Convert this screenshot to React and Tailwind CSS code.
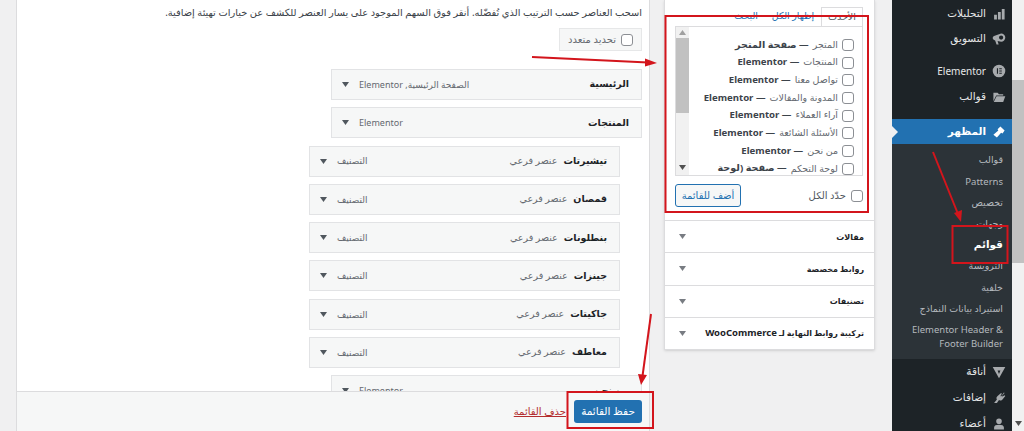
const MENU_ITEMS = [
  { title: "الرئيسية", type: "الصفحة الرئيسية, Elementor" },
  { title: "المنتجات", type: "Elementor" },
  { title: "تيشيرتات", sub: true },
  { title: "قمصان", sub: true },
  { title: "بنطلونات", sub: true },
  { title: "جينزات", sub: true },
  { title: "جاكيتات", sub: true },
  { title: "معاطف", sub: true },
  { title: "من نحن", type: "Elementor" },
];

const PAGES = [
  ["المتجر", "صفحة المتجر"],
  ["المنتجات", "Elementor"],
  ["تواصل معنا", "Elementor"],
  ["المدونة والمقالات", "Elementor"],
  ["آراء العملاء", "Elementor"],
  ["الأسئلة الشائعة", "Elementor"],
  ["من نحن", "Elementor"],
  ["لوحة التحكم", "صفحة (لوحة"],
];

const ACCORDIONS = ["مقالات", "روابط مخصصة", "تصنيفات"];

const SUBMENU = ["قوالب", "Patterns", "تخصيص", "وجهات"];
const SUBMENU_2 = ["الترويسة", "خلفية", "استيراد بيانات النماذج"];

function Caret({ className = "fill-[#50575e]" }) {
  return (
    <svg width="7" height="5" viewBox="0 0 7 5" className={`shrink-0 ${className}`}>
      <polygon points="0,0 7,0 3.5,5" />
    </svg>
  );
}

function Checkbox() {
  return <span className="w-[12px] h-[12px] shrink-0 block rounded-[3px] border border-[#8c8f94] bg-white" />;
}

function MenuRow({ title, type, sub }) {
  return (
    <div className={`w-[311px] h-[31px] shrink-0 flex items-center justify-between border border-[#e2e3e5] bg-[#f6f7f7] pr-[12px] pl-[10px] ${sub ? "mr-[22px]" : ""}`}>
      <div className="flex items-center gap-[6px]">
        <span className="text-[9.5px] font-bold text-[#1d2327]">{title}</span>
        {sub && <span className="text-[9.5px] text-[#646970]">عنصر فرعي</span>}
      </div>
      <div className="flex items-center gap-[10px]">
        <span className="text-[9px] text-[#646970]">{type || "التصنيف"}</span>
        <Caret />
      </div>
    </div>
  );
}

function SideIcon({ children }) {
  return (
    <svg width="14" height="14" viewBox="0 0 20 20" className="shrink-0 fill-[#a7aaad]">
      {children}
    </svg>
  );
}

function SideItem({ label, icon, className = "", textClass = "text-[10.5px]" }) {
  return (
    <div className={`shrink-0 flex items-center gap-[6px] pr-[6px] ${className}`}>
      {icon}
      <span className={`text-[#e6e7e8] ${textClass}`}>{label}</span>
    </div>
  );
}

export default function App() {
  return (
    <div dir="rtl" className="relative w-[1024px] h-[431px] overflow-hidden flex bg-[#f0f0f1] font-['Noto_Sans','DejaVu_Sans',sans-serif]">
      {/* page scrollbar */}
      <div className="w-[12px] shrink-0 bg-[#f1f1f1] flex flex-col items-center justify-between">
        <div className="w-full mt-[80px] h-[183px] bg-[#c1c1c1]" />
        <Caret className="fill-[#505050] mb-[5px]" />
      </div>

      {/* admin sidebar */}
      <aside className="w-[120px] shrink-0 overflow-hidden bg-[#1d2327] flex flex-col pt-[3px]">
        <SideItem
          className="h-[21px]"
          label="التحليلات"
          icon={<SideIcon><path d="M3 11h4v7H3zM8.5 7h4v11h-4zM14 3h4v15h-4z" /></SideIcon>}
        />
        <SideItem
          className="h-[29px]"
          label="التسويق"
          icon={<SideIcon><path fillRule="evenodd" d="M13 2a6 6 0 0 1 0 12l-5-1 1.500 5H6.500L4.500 12C2.500 11.500 1 10 1 8.500S2.500 6 4 5.500zM13 5a3 3 0 1 0 0 6 3 3 0 0 0 0-6z" /></SideIcon>}
        />
        <SideItem
          className="h-[36px]"
          label="Elementor"
          textClass="text-[10px]"
          icon={<SideIcon><path fillRule="evenodd" d="M10 1a9 9 0 1 0 0 18 9 9 0 0 0 0-18zM7 6h1.600v8H7zm3.400 0H14v1.600h-3.600zm0 3.200H14v1.600h-3.600zm0 3.200H14V14h-3.600z" /></SideIcon>}
        />
        <SideItem
          className="h-[16px]"
          label="قوالب"
          icon={<SideIcon><path d="M2 4h6l2 2h6v2H6l-4 8zM6.500 9H19l-3 8H2.500z" /></SideIcon>}
        />
        <div className="relative shrink-0 h-[25px] mt-[14px] bg-[#2271b1] flex items-center gap-[6px] pr-[6px]">
          <SideIcon>
            <path className="fill-white" d="M12 2l6 6-3 4-2-1-6 7-5-4 7-6-1-2z" />
          </SideIcon>
          <span className="text-[10.5px] font-bold text-white">المظهر</span>
          <span className="absolute left-0 top-[7px] w-0 h-0 border-y-[6px] border-y-transparent border-l-[6px] border-l-[#f0f0f1]" />
        </div>
        <div className="shrink-0 bg-[#2c3338] pt-[6px] pb-[8px] pr-[9px] text-[9.5px] text-[#b4b9be] flex flex-col">
          {SUBMENU.map((label) => (
            <div key={label} className="h-[21.2px] flex items-center">{label}</div>
          ))}
          <div className="h-[21.2px] flex items-center text-[10.5px] font-bold text-white">قوائم</div>
          {SUBMENU_2.map((label) => (
            <div key={label} className="h-[21.2px] flex items-center">{label}</div>
          ))}
          <div className="mt-[3px] leading-[14px] pl-[6px]">Elementor Header &amp; Footer Builder</div>
        </div>
        <SideItem
          className="h-[26px]"
          label="أناقة"
          icon={<SideIcon><path fillRule="evenodd" d="M1 3h18l-9 16zM8 8l2 5 2-5z" /></SideIcon>}
        />
        <SideItem
          className="h-[26px]"
          label="إضافات"
          icon={<SideIcon><path d="M17 2l1 1-4 4 1 1 3-2 1 1-4 5c-2 2-4 2-5 1l-3 4H3l4-5c-1-2-1-3 1-5l5-4 1 1-2 3 1 1z" /></SideIcon>}
        />
        <SideItem
          className="h-[26px]"
          label="أعضاء"
          icon={<SideIcon><path d="M10 2a4 4 0 1 1 0 8 4 4 0 0 1 0-8zM3 18v-3c0-3 3-4 7-4s7 1 7 4v3z" /></SideIcon>}
        />
      </aside>

      {/* menu items column */}
      <section className="w-[211px] shrink-0 mr-[17px] self-start bg-white border border-t-0 border-[#dcdcde] shadow-sm">
        <div className="h-[220px] pt-[7px] pr-[11px] pl-[10px]">
          <div className="h-[19px] flex items-stretch text-[9.5px] text-[#2271b1] whitespace-nowrap">
            <span className="w-[42px] border border-b-0 border-[#dcdcde] flex items-center justify-center text-[#50575e]">الأحدث</span>
            <span className="mr-[8px] w-[40px] flex items-center justify-center">إظهار الكل</span>
            <span className="mr-[15px] flex items-center">البحث</span>
          </div>
          <div className="h-[150px] border border-[#dcdcde] flex overflow-hidden">
            <div className="flex-1 pt-[9px] pr-[8px]">
              {PAGES.map(([name, kind]) => (
                <div key={name} className="h-[17.7px] flex items-center gap-[4px] whitespace-nowrap">
                  <Checkbox />
                  <span className="text-[9.5px] text-[#646970]">{name}</span>
                  <span className="text-[9.6px] font-bold text-[#3c434a]">— {kind}</span>
                </div>
              ))}
            </div>
            <div className="w-[13px] shrink-0 bg-[#f1f1f1] flex flex-col items-center">
              <Caret className="fill-[#a0a0a0] rotate-180 mt-[3px]" />
              <div className="w-full h-[75px] mt-[3px] bg-[#c1c1c1]" />
              <Caret className="fill-[#505050] mt-[52px]" />
            </div>
          </div>
          <div className="mt-[8px] flex items-center justify-between">
            <div className="flex items-center gap-[5px]">
              <Checkbox />
              <span className="text-[10px] text-[#50575e]">حدّد الكل</span>
            </div>
            <button className="w-[66px] h-[23px] rounded-[3px] border border-[#2271b1] bg-[#f6f7f7] text-[10px] text-[#2271b1]">أضف للقائمة</button>
          </div>
        </div>
        {ACCORDIONS.map((label) => (
          <div key={label} className="h-[32.3px] border-t border-[#dcdcde] flex items-center justify-between pr-[10px] pl-[14px]">
            <span className="text-[8px] font-bold text-[#1d2327]">{label}</span>
            <Caret className="fill-[#787c82]" />
          </div>
        ))}
        <div className="h-[32.3px] border-t border-[#dcdcde] flex items-center justify-between pr-[10px] pl-[14px]">
          <span className="text-[8px] font-bold text-[#1d2327]">
            تركيبة روابط النهاية لـ <span className="text-[9.5px]">WooCommerce</span>
          </span>
          <Caret className="fill-[#787c82]" />
        </div>
      </section>

      {/* menu structure column */}
      <main className="w-[634px] shrink-0 mr-[14px] h-full bg-white border-x border-[#dcdcde] flex flex-col">
        <div className="flex-1 min-h-0 overflow-hidden pr-[7px] pt-[4px]">
          <p className="h-[16px] flex items-center text-[9.85px] text-[#3c434a] whitespace-nowrap">
            اسحب العناصر حسب الترتيب الذي تُفضّله. أنقر فوق السهم الموجود على يسار العنصر للكشف عن خيارات تهيئة إضافية.
          </p>
          <div className="mt-[8px] w-[83px] h-[23px] border border-[#e6e7e8] bg-[#f6f7f7] flex items-center gap-[5px] pr-[8px]">
            <Checkbox />
            <span className="text-[10px] text-[#646970]">تحديد متعدد</span>
          </div>
          <div className="mt-[18px] flex flex-col gap-[7.3px]">
            {MENU_ITEMS.map((item) => (
              <MenuRow key={item.title} {...item} />
            ))}
          </div>
        </div>
        <div className="h-[40px] shrink-0 border-t border-[#dcdcde] bg-[#f6f7f7] flex items-center gap-[8px] pr-[7px]">
          <button className="w-[68px] h-[23px] rounded-[3px] bg-[#2271b1] text-[10.5px] text-white">حفظ القائمة</button>
          <span className="text-[10px] text-[#b32d2e] underline">حذف القائمة</span>
        </div>
      </main>

      {/* red annotations drawn over the screenshot */}
      <svg dir="ltr" width="1024" height="431" viewBox="0 0 1024 431" className="absolute left-0 top-0 pointer-events-none">
        <g fill="none" stroke="#d3151c" strokeWidth="2">
          <rect x="665.5" y="16" width="202.5" height="196" />
          <rect x="952.5" y="226" width="55" height="37" />
          <rect x="567.5" y="392" width="85.5" height="36" />
          <line x1="532" y1="57" x2="648" y2="62.5" />
          <line x1="651" y1="314" x2="642.5" y2="376" />
          <line x1="933" y1="152" x2="958" y2="214" />
        </g>
        <g fill="#d3151c">
          <polygon points="657,63 645,58.5 645,66.5" />
          <polygon points="641,385 638,374 647,375" />
          <polygon points="961,222 954,213 962,210" />
        </g>
      </svg>
    </div>
  );
}
